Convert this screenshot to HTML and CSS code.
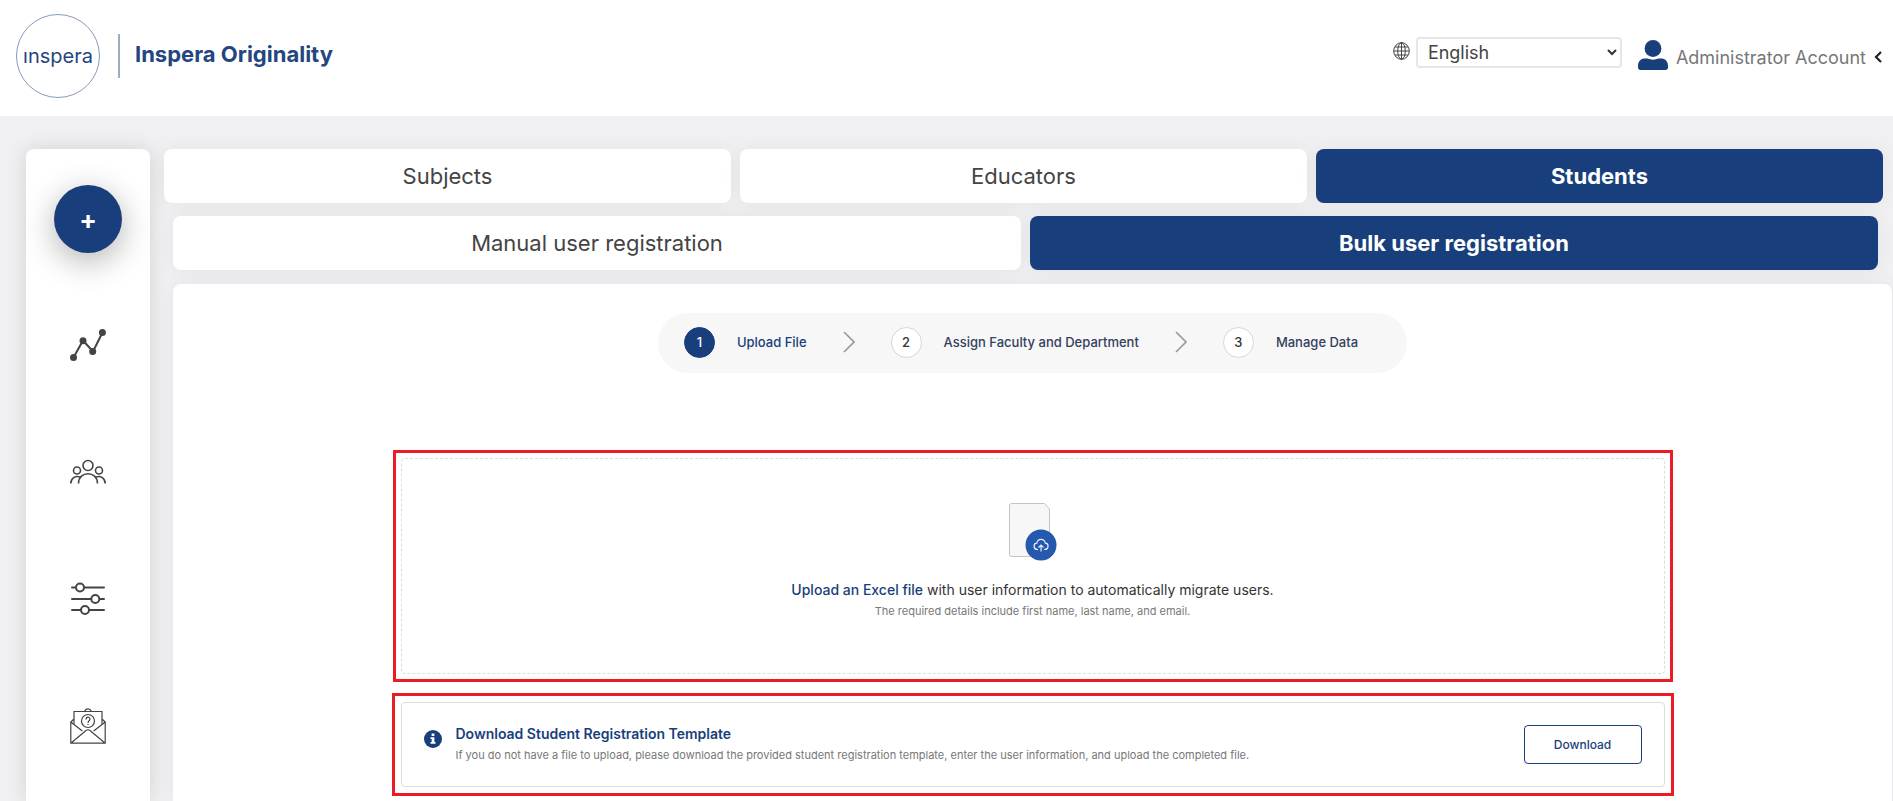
FILE: index.html
```html
<!DOCTYPE html>
<html lang="en">
<head>
<meta charset="utf-8">
<meta name="viewport" content="width=device-width, initial-scale=1">
<title>Inspera Originality</title>
<link rel="stylesheet" href="styles.css">
</head>
<body>
<header class="topbar">
  <a class="brand" href="#">
    <span class="brand-mark">ınspera</span>
    <span class="brand-rule"></span>
    <span class="brand-name">Inspera Originality</span>
  </a>
  <div class="account">
    <label class="language-label" for="language" aria-label="Language">
      <svg width="17" height="18" viewBox="0 0 17 18" fill="none" stroke="#444" stroke-width="1">
        <ellipse cx="8.5" cy="9" rx="7.8" ry="8.3"/><ellipse cx="8.5" cy="9" rx="3.8" ry="8.3"/>
        <path d="M8.5 .7v16.6M.7 9h15.600M2 5h13M2 13h13"/>
      </svg>
    </label>
    <div class="language">
      <select id="language"><option>English</option></select>
      <svg class="language-arrow" width="10" height="7" viewBox="0 0 10 7" fill="none" stroke="#333" stroke-width="2"><path d="M1 1l4 4 4-4"/></svg>
    </div>
    <button class="account-button" type="button">
      <svg width="30" height="30" viewBox="0 0 30 30" fill="#183f7b"><circle cx="15" cy="8.5" r="8.4"/><path d="M0 26c0-5 3-7.500 7-7.500h2.500c3.500 1.500 7.500 1.500 11 0H23c4 0 7 2.500 7 7.500v1.500c0 1.500-1 2.500-2.500 2.500h-25C1 30 0 29 0 27.500z"/></svg>
      <span class="account-name">Administrator Account
        <svg width="8" height="12" viewBox="0 0 8 12" fill="none" stroke="#222" stroke-width="2.200"><path d="M7 1L2 6l5 5"/></svg>
      </span>
    </button>
  </div>
</header>
<div class="layout">
  <nav class="sidebar" aria-label="Main">
    <button class="add" type="button" aria-label="Add">+</button>
    <a class="side-link" href="#" aria-label="Statistics">
      <svg width="36" height="36" viewBox="0 0 36 36" fill="#444"><path d="M3.500 30.500L13 13.500l10 11L32.500 5.500" fill="none" stroke="#444" stroke-width="2"/><circle cx="3.500" cy="30.500" r="3.500"/><circle cx="13" cy="13.800" r="3.500"/><circle cx="22.700" cy="24.500" r="3.500"/><circle cx="32.400" cy="5.500" r="3.500"/></svg>
    </a>
    <a class="side-link" href="#" aria-label="Users">
      <svg width="36" height="36" viewBox="0 0 36 36" fill="none" stroke="#444" stroke-width="1.600"><circle cx="18" cy="11.500" r="5"/><circle cx="7" cy="16.500" r="3.500"/><circle cx="29" cy="16.500" r="3.500"/><path d="M8.500 29.500c0-13 19-13 19 0M.8 29.500c0-5.500 4.500-8.200 9.500-6.500M35.200 29.500c0-5.500-4.500-8.200-9.500-6.500"/></svg>
    </a>
    <a class="side-link" href="#" aria-label="Settings">
      <svg width="36" height="36" viewBox="0 0 36 36" fill="#fff" stroke="#444" stroke-width="2" stroke-linecap="round"><path d="M2 6.500h32M2 18h32M2 29h32"/><circle cx="10" cy="6.500" r="4"/><circle cx="25.300" cy="18" r="4"/><circle cx="15" cy="29" r="4"/></svg>
    </a>
    <a class="side-link" href="#" aria-label="Support">
      <svg width="36" height="36" viewBox="0 0 36 36" fill="none" stroke="#444" stroke-width="1.200"><path d="M4 17V3.500h28V17M14.500 3.500c1.500-3.500 5.500-3.500 7 0M4 11L.8 14v21.200h34.400V14L32 11M.8 14l11.500 9M35.200 14l-11.500 9M.8 35.200L16 22.500q2-1.500 4 0l15.200 12.700"/><circle cx="18" cy="13" r="6.500"/><path d="M16 11.500c0-3 4-3 4-.5 0 2-2 1.500-2 4M18 16v1"/></svg>
    </a>
  </nav>
  <main class="content">
    <nav class="tabs" aria-label="Sections">
      <a class="tab" href="#">Subjects</a>
      <a class="tab" href="#">Educators</a>
      <a class="tab tab-active" href="#" aria-current="page">Students</a>
    </nav>
    <nav class="tabs subtabs" aria-label="Registration type">
      <a class="tab" href="#">Manual user registration</a>
      <a class="tab tab-active" href="#" aria-current="page">Bulk user registration</a>
    </nav>
    <section class="panel">
      <ol class="steps">
        <li class="step step-active"><span class="step-number">1</span><span>Upload File</span></li>
        <li class="step-arrow" aria-hidden="true"><svg width="12" height="22" viewBox="0 0 12 22" fill="none" stroke="#999" stroke-width="1.600"><path d="M1 1l10 10L1 21"/></svg></li>
        <li class="step"><span class="step-number">2</span><span>Assign Faculty and Department</span></li>
        <li class="step-arrow" aria-hidden="true"><svg width="12" height="22" viewBox="0 0 12 22" fill="none" stroke="#999" stroke-width="1.600"><path d="M1 1l10 10L1 21"/></svg></li>
        <li class="step"><span class="step-number">3</span><span>Manage Data</span></li>
      </ol>
      <div class="highlight">
        <div class="upload">
          <svg width="48" height="58" viewBox="0 0 48 58" fill="none">
            <path d="M2.500.5h33l5 5.500v45.500q0 2-2 2h-36q-2 0-2-2v-49q0-2 2-2z" fill="#f7f7f7" stroke="#c4c4c4"/>
            <circle cx="32" cy="42" r="15.500" fill="#2459ae"/>
            <path d="M29 46.500h-.5c-4.500-.3-4.500-6-.7-6.300 1-5 7.500-5 8.500 0 3.800.3 3.800 6-.8 6.300H35M32 48.500v-6.500m-2.500 2.500l2.500-2.500 2.500 2.500" stroke="#e6edf8" stroke-width="1.200"/>
          </svg>
          <p class="upload-title"><a href="#">Upload an Excel file</a> with user information to automatically migrate users.</p>
          <p class="note">The required details include first name, last name, and email.</p>
        </div>
      </div>
      <div class="highlight highlight-wide">
        <div class="template">
          <svg width="18" height="18" viewBox="0 0 18 18"><circle cx="9" cy="9" r="9" fill="#183f7b"/><path d="M7.600 3.500h2.800v2.400H7.600zM6.500 7.200h3.900v4.900h1.100v1.700h-5v-1.700h1.200V8.900H6.500z" fill="#fff"/></svg>
          <div class="template-text">
            <h2>Download Student Registration Template</h2>
            <p class="note">If you do not have a file to upload, please download the provided student registration template, enter the user information, and upload the completed file.</p>
          </div>
          <button class="download" type="button">Download</button>
        </div>
      </div>
    </section>
  </main>
</div>
</body>
</html>
```
FILE: styles.css
```css
* { box-sizing: border-box; }
body {
  margin: 0;
  height: 100vh;
  display: flex;
  flex-direction: column;
  overflow: hidden;
  background: #f0f0f2;
  color: #444;
  font-family: Inter, "Liberation Sans", sans-serif;
}
a { color: inherit; text-decoration: none; }
button, select { font: inherit; color: inherit; }
p, h2 { margin: 0; }
svg { display: block; flex: none; }

.topbar {
  flex: none;
  height: 116px;
  padding: 0 11px 0 16px;
  display: flex;
  justify-content: space-between;
  align-items: flex-start;
  background: #fff;
}
.brand { display: flex; align-items: center; padding-top: 14px; color: #24457f; }
.brand-mark {
  width: 84px;
  height: 84px;
  display: flex;
  align-items: center;
  justify-content: center;
  border: 1px solid #8799bb;
  border-radius: 50%;
  font-size: 20px;
}
.brand-rule { width: 2px; height: 44px; margin: 0 15px 0 18px; background: #9dacc7; }
.brand-name { font-size: 22px; line-height: 28px; padding-bottom: 4px; font-weight: 700; }

.account { display: flex; align-items: center; padding-top: 34px; }
.language-label { margin-right: 6px; padding-bottom: 2px; }
.language { display: grid; align-items: center; margin-right: 16px; }
.language select {
  grid-area: 1 / 1;
  width: 206px;
  height: 31px;
  padding: 0 10px;
  appearance: none;
  background: #fff;
  border: 2px solid #e6e6e6;
  border-radius: 4px;
  font-size: 18px;
}
.language-arrow { grid-area: 1 / 1; justify-self: end; margin-right: 5px; pointer-events: none; }
.account-button {
  display: flex;
  align-items: center;
  gap: 8px;
  padding: 6px 0 0;
  border: 0;
  background: none;
  color: #777;
  font-size: 18px;
}
.account-name { display: flex; align-items: center; gap: 8px; padding-top: 4px; }

.layout { flex: 1; min-height: 0; display: flex; gap: 14px; padding: 33px 0 0 26px; }
.sidebar {
  flex: none;
  width: 124px;
  padding-top: 36px;
  display: flex;
  flex-direction: column;
  align-items: center;
  background: #fff;
  border-radius: 8px 8px 0 0;
  box-shadow: 0 0 20px rgba(0, 0, 0, .12);
}
.add {
  flex: none;
  width: 68px;
  height: 68px;
  margin-bottom: 74px;
  padding: 0;
  border: 0;
  border-radius: 50%;
  background: #183f7b;
  color: #fff;
  font-size: 26px;
  font-weight: 700;
  box-shadow: 0 8px 32px rgba(0, 0, 0, .3);
}
.side-link { flex: none; margin-bottom: 91px; }

.content { flex: 1; min-width: 0; display: flex; flex-direction: column; }
.tabs { flex: none; display: flex; gap: 9px; padding-right: 10px; margin-bottom: 13px; }
.subtabs { padding: 0 15px 0 9px; margin-bottom: 14px; }
.tab {
  flex: 1;
  height: 54px;
  display: flex;
  align-items: center;
  justify-content: center;
  border-radius: 8px;
  background: #fff;
  box-shadow: 0 0 20px rgba(0, 0, 0, .05);
  font-size: 22px;
}
.tab-active { background: #183f7b; color: #fff; font-weight: 700; }

.panel {
  flex: 1;
  min-height: 0;
  margin-left: 9px;
  padding-top: 29px;
  display: flex;
  flex-direction: column;
  align-items: center;
  background: #fff;
  border-right: 1px solid #e6e6e8;
  border-radius: 8px 8px 0 0;
  box-shadow: 0 0 20px rgba(0, 0, 0, .05);
}
.steps {
  flex: none;
  margin: 0 0 77px;
  padding: 0 49px 2px 26px;
  height: 60px;
  display: flex;
  align-items: center;
  gap: 36px;
  list-style: none;
  border-radius: 30px;
  background: #f7f7f7;
  color: #33415c;
  font-size: 13px;
  font-weight: 500;
}
.step { display: flex; align-items: center; gap: 22px; }
.step-number {
  width: 31px;
  height: 31px;
  display: flex;
  align-items: center;
  justify-content: center;
  border: 1px solid #d5d6de;
  border-radius: 50%;
  background: #fff;
  color: #333;
}
.step-active { color: #183f7b; }
.step-active .step-number { background: #183f7b; border-color: #183f7b; color: #fff; }

.highlight {
  flex: none;
  width: 1280px;
  max-width: 92%;
  margin-bottom: 11px;
  padding: 5px;
  border: 3px solid #ed1c24;
}
.highlight-wide { width: 1282px; padding: 6px; }
.upload {
  height: 216px;
  padding-top: 44px;
  display: flex;
  flex-direction: column;
  align-items: center;
  border: 1px dashed #dcdcdc;
  border-radius: 4px;
}
.upload-title { margin: 19px 0 3px; font-size: 14px; line-height: 20px; color: #333; }
.upload-title a { color: #183f7b; font-weight: 500; }
.note { font-size: 11px; line-height: 16px; color: #777; }
.template {
  height: 85px;
  padding: 0 22px;
  display: flex;
  align-items: center;
  border: 1px solid #dcdcdc;
  border-radius: 4px;
}
.template svg { margin-bottom: 12px; }
.template-text { flex: 1; padding: 0 24px 3px 14px; }
.template h2 { margin-bottom: 3px; font-size: 14px; line-height: 20px; font-weight: 600; color: #183f7b; }
.download {
  width: 118px;
  height: 39px;
  border: 1px solid #183f7b;
  border-radius: 4px;
  background: #fff;
  color: #183f7b;
  font-size: 12px;
  font-weight: 500;
}
```
